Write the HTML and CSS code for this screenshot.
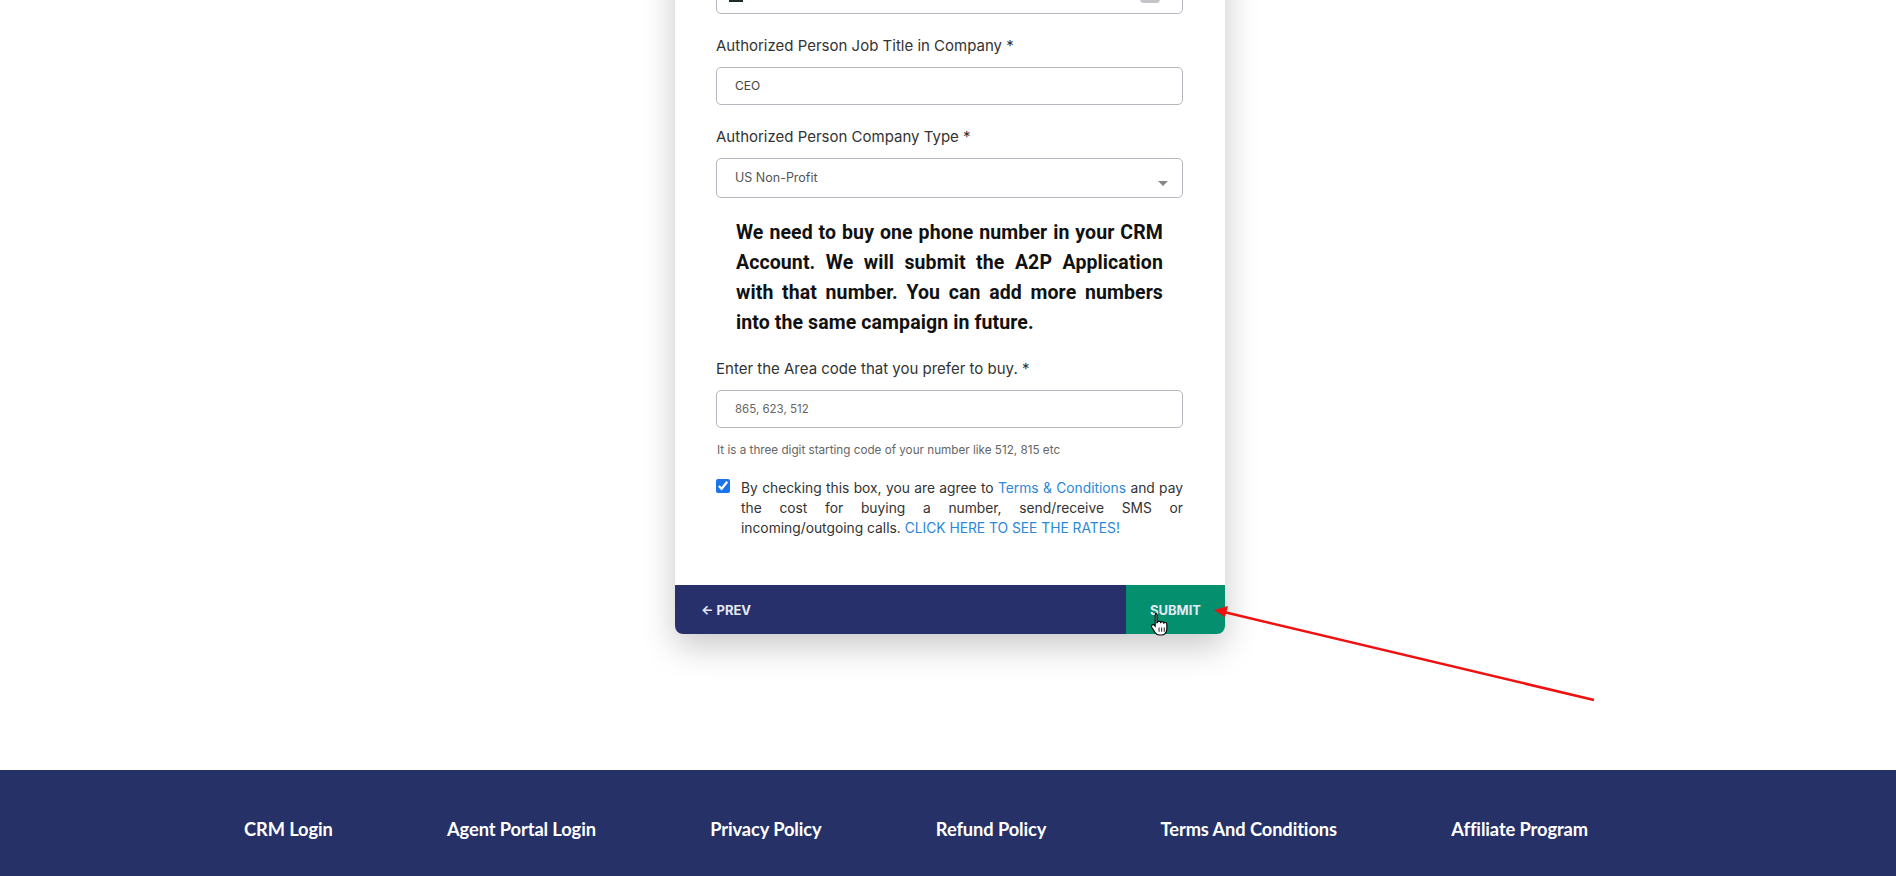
FILE: index.html
```html
<!DOCTYPE html>
<html lang="en">
<head>
  <meta charset="UTF-8">
  <meta name="viewport" content="width=device-width, initial-scale=1">
  <title>A2P Registration</title>
  <link rel="stylesheet" href="styles.css">
</head>
<body>

  <!-- Форма -->
  <div class="wrap">
    <div class="card">
      <div class="card-body">

        <div class="field">
          <div class="input top-input">
            <span class="flag"></span>
            <span class="spin"></span>
          </div>
        </div>

        <div class="field">
          <label>Authorized Person Job Title in Company *</label>
          <div class="input">CEO</div>
        </div>

        <div class="field">
          <label>Authorized Person Company Type *</label>
          <div class="input select">US Non-Profit <span class="caret"></span></div>
        </div>

        <p class="notice">We need to buy one phone number in your CRM Account. We will submit the A2P Application with that number. You can add more numbers into the same campaign in future.</p>

        <div class="field">
          <label>Enter the Area code that you prefer to buy. *</label>
          <div class="input placeholder">865, 623, 512</div>
          <div class="hint">It is a three digit starting code of your number like 512, 815 etc</div>
        </div>

        <div class="agree">
          <input type="checkbox" checked>
          <p>By checking this box, you are agree to <a href="#">Terms &amp; Conditions</a> and pay the cost for buying a number, send/receive SMS or incoming/outgoing calls. <a href="#">CLICK HERE TO SEE THE RATES!</a></p>
        </div>

      </div>

      <div class="card-nav">
        <button class="prev">&larr; PREV</button>
        <button class="submit">SUBMIT</button>
      </div>
    </div>
  </div>

  <footer class="footer">
    <nav class="footer-links">
      <a href="#">CRM Login</a>
      <a href="#">Agent Portal Login</a>
      <a href="#">Privacy Policy</a>
      <a href="#">Refund Policy</a>
      <a href="#">Terms And Conditions</a>
      <a href="#">Affiliate Program</a>
    </nav>
  </footer>

  <!-- стрілка-підказка -->
  <svg class="pointer-arrow" width="400" height="110" viewBox="0 0 400 110">
    <line x1="392" y1="96" x2="22" y2="8" stroke="#f01010" stroke-width="2.5"/>
    <polygon points="12,6 26,2 23,13" fill="#f01010"/>
  </svg>

  <svg class="cursor" width="19" height="26" viewBox="0 0 22 30">
    <path d="M6 2.5c1.2 0 2 .8 2 2v9l.5-.2c.2-1 1-1.6 1.9-1.6 1 0 1.7.6 1.9 1.5.4-.6 1-1 1.8-1 1 0 1.8.7 1.9 1.7.4-.4.9-.6 1.5-.6 1.1 0 2 .9 2 2v5.5c0 3.8-2.6 7-6.5 7H11c-2.3 0-3.8-1-5.1-2.8L2 18.7c-.6-.9-.4-2 .4-2.6.8-.6 1.9-.4 2.5.3l1.1 1.3V4.5c0-1.2.8-2 2-2z" fill="#fff" stroke="#000" stroke-width="1.3"/>
    <path d="M10.5 19v5M13.5 19v5M16.5 19v5" stroke="#000" stroke-width="1"/>
  </svg>

</body>
</html>
```

FILE: styles.css
```css
body { margin: 0; background: #fff; font-family: Inter, "Liberation Sans", sans-serif; color: #333; position: relative; overflow: hidden; }
.wrap { display: flex; justify-content: center; padding-left: 4px; }
.card { width: 550px; margin-top: -60px; background: #fff; border-radius: 8px; box-shadow: 0 12px 34px rgba(0, 0, 0, 0.22); }
.card-body { padding: 36px 42px 47px 41px; }

.field { margin-bottom: 22px; }
.field label { display: block; font-size: 15px; line-height: 20px; color: #333; margin-bottom: 11px; }
.input { position: relative; height: 36px; border: 1px solid #b4b7bd; border-radius: 5px; padding: 0 18px; font-size: 12px; line-height: 36px; color: #444; }
.top-input .flag { position: absolute; left: 12px; top: 15px; width: 14px; height: 10px; background: #1d2b22; }
.top-input .spin { position: absolute; right: 22px; top: 12px; width: 20px; height: 14px; background: #c2c4c8; border-radius: 4px; }
.select { height: 38px; line-height: 38px; font-size: 12.5px; color: #555; }
.caret { position: absolute; right: 14px; top: 22px; border: 5px solid transparent; border-top: 5px solid #888; border-bottom: 0; }
.placeholder { color: #666; font-size: 11.5px; }
.hint { margin-top: 14px; font-size: 11.7px; line-height: 16px; color: #666; padding-left: 1px; }

.notice { margin: -2px 20px 21px; font-family: Roboto, "Liberation Sans", sans-serif; font-weight: 700; font-size: 19.5px; letter-spacing: 0.1px; line-height: 30px; color: #111; text-align: justify; }

.agree { display: flex; gap: 11px; margin-top: -2px; }
.agree input { width: 14px; height: 14px; margin: 1px 0 0; accent-color: #1a73e8; flex-shrink: 0; }
.agree p { margin: 0; font-size: 13.8px; line-height: 20px; color: #333; text-align: justify; }
.agree a { color: #2b88d9; text-decoration: none; }

.card-nav { display: flex; height: 49px; border-radius: 0 0 8px 8px; overflow: hidden; }
.card-nav button { border: 0; font-family: Inter, "Liberation Sans", sans-serif; font-weight: 700; font-size: 13px; color: #e6e9f2; cursor: pointer; }
.prev { flex: 1; background: #27306a; text-align: left; padding-left: 26px; }
.submit { width: 99px; background: #04906f; }

.footer { margin-top: 136px; height: 120px; background: #263168; }
.footer-links { display: flex; justify-content: space-between; width: 1344px; margin-left: 244px; padding-top: 47px; }
.footer-links a { color: #fff; text-decoration: none; font-family: Lato, "Liberation Sans", sans-serif; font-weight: 700; font-size: 18.3px; line-height: 24px; letter-spacing: -0.1px; }

.pointer-arrow { position: absolute; left: 1202px; top: 604px; }
.cursor { position: absolute; left: 1150px; top: 611px; }
```
